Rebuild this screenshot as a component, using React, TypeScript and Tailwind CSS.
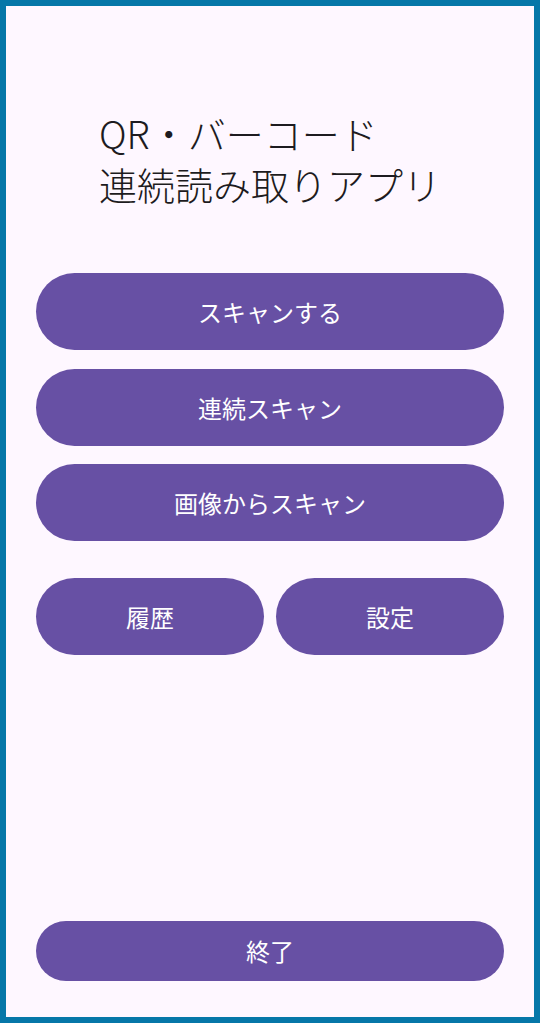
const font = { fontFamily: '"Noto Sans CJK JP", "Noto Sans", sans-serif' };

function PillButton({ label, className = '' }: { label: string; className?: string }) {
  return (
    <button
      type="button"
      className={`flex items-center justify-center rounded-full bg-[#6750a4] text-[24px] leading-none text-white ${className}`}
    >
      {label}
    </button>
  );
}

export default function App() {
  return (
    <div className="h-[1023px] w-[540px] bg-[#0677a8] p-[6px]" style={font}>
      <div className="flex h-full flex-col bg-[#fef7ff] px-[30px] pb-[36px] pt-[101px]">
        <div className="flex justify-center">
          <h1 className="text-left text-[38px] font-light leading-[51px] text-[#1d1b20]">
            QR・バーコード
            <br />
            連続読み取りアプリ
          </h1>
        </div>

        <PillButton label="スキャンする" className="mt-[64px] h-[77px] w-full" />
        <PillButton label="連続スキャン" className="mt-[19px] h-[77px] w-full" />
        <PillButton label="画像からスキャン" className="mt-[18px] h-[77px] w-full" />

        <div className="mt-[37px] grid grid-cols-2 gap-[12px]">
          <PillButton label="履歴" className="h-[77px]" />
          <PillButton label="設定" className="h-[77px]" />
        </div>

        <div className="flex-1" />

        <PillButton label="終了" className="h-[60px] w-full" />
      </div>
    </div>
  );
}
